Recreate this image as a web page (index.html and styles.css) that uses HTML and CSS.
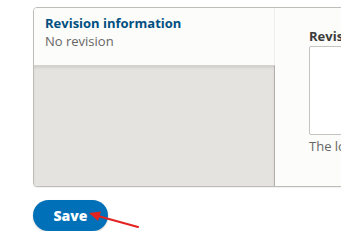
FILE: index.html
```html
<!DOCTYPE html>
<html>
<head>
<meta charset="utf-8">
<link rel="stylesheet" href="styles.css">
</head>
<body>
<div class="page">
  <div class="panel">
    <div class="meta">
      <div class="meta-header">
        <h3 class="meta-title">Revision information</h3>
        <div class="meta-sub">No revision</div>
      </div>
      <div class="meta-body"></div>
    </div>
    <div class="main">
      <label class="field-label">Revision log message</label>
      <textarea class="field-area"></textarea>
      <div class="field-desc">The log entry explaining the changes in this revision.</div>
    </div>
  </div>
  <div class="actions">
    <button class="btn-save">Save</button>
  </div>
  <svg class="arrow" width="56" height="22" viewBox="0 0 56 22">
    <line x1="50" y1="19" x2="10" y2="8" stroke="#e32222" stroke-width="2.2" stroke-linecap="round"/>
    <polygon points="1,5 13,3.5 10,13" fill="#e32222"/>
  </svg>
</div>
</body>
</html>
```
FILE: styles.css
```css
html, body {
  margin: 0;
  padding: 0;
  background: #fff;
  overflow: hidden;
  font-family: "Open Sans", "DejaVu Sans", sans-serif;
}
.page {
  position: relative;
  padding: 7px 0 0 33px;
  width: 800px;
}
.panel {
  display: flex;
  width: 700px;
  height: 178px;
  border: 1px solid #bebdb8;
  border-radius: 4px;
  background: #fcfcfa;
  overflow: hidden;
  box-shadow: 0 1px 1px rgba(0,0,0,0.06);
}
.meta {
  flex: 0 0 240px;
  display: flex;
  flex-direction: column;
  border-right: 1px solid #f0efec;
}
.meta-header {
  padding: 6px 11px 15px 11px;
  background: #fcfcfa;
}
.meta-title {
  margin: 0;
  font-size: 13px;
  line-height: 18px;
  font-weight: 700;
  color: #004f80;
  white-space: nowrap;
}
.meta-sub {
  font-size: 13px;
  line-height: 18px;
  color: #666;
}
.meta-body {
  flex: 1;
  background: #e5e3df;
  border-right: 1px solid #b0afab;
  margin-right: -1px;
  box-shadow: inset 0 2px 2px rgba(0,0,0,0.08);
  border-top: 1px solid #d4d2ce;
}
.main {
  flex: 1;
  padding: 19px 0 0 34px;
}
.field-label {
  display: block;
  font-size: 13px;
  line-height: 18px;
  font-weight: 700;
  color: #3b3b3b;
  margin-bottom: 1px;
  white-space: nowrap;
}
.field-area {
  display: block;
  box-sizing: border-box;
  width: 300px;
  height: 89px;
  margin: 0;
  border: 1px solid #c4c4c0;
  border-radius: 2px;
  background: #fff;
  resize: none;
}
.field-desc {
  margin-top: 2px;
  font-size: 13px;
  line-height: 18px;
  color: #666;
  white-space: nowrap;
}
.actions {
  margin-top: 13px;
}
.btn-save {
  box-sizing: border-box;
  height: 31px;
  width: 75px;
  border: 0;
  border-radius: 16px;
  background: #0071b8;
  color: #fff;
  font-family: "Open Sans", "DejaVu Sans", sans-serif;
  font-weight: 800;
  font-size: 14px;
  padding: 0;
  box-shadow: 0 1px 2px rgba(0,0,0,0.2);
}
.arrow {
  position: absolute;
  left: 88px;
  top: 208px;
}
```
